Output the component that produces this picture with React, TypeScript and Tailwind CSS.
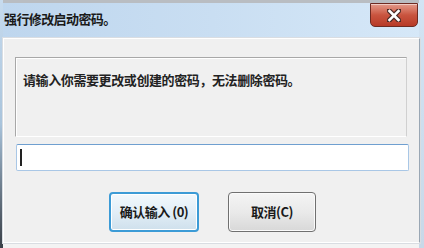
import React from "react";

const cjk = { fontFamily: '"Noto Sans CJK SC", "Noto Sans", sans-serif' };

export default function App() {
  return (
    <div className="relative w-[424px] h-[248px] overflow-hidden bg-[#f3f3f3]" style={cjk}>
      {/* window frame strip left */}
      <div className="absolute left-0 top-0 w-[3px] h-full bg-gradient-to-b from-[#c7dbee] via-[#a9c4dc] to-[#3a4048]" />
      <div className="absolute right-0 top-0 w-[5px] h-full bg-gradient-to-b from-[#d2e4f4] to-[#c8d8e8]" />
      {/* top strip */}
      <div className="h-[3px] bg-[#b9bdc2]" />
      {/* title bar */}
      <div className="h-[35px] bg-gradient-to-r from-[#bed6ee] via-[#c9def2] to-[#d6e8f8] flex items-start pl-[4px] pt-[7px]">
        <span className="text-[13px] leading-[18px] font-semibold text-[#1a1a1a] tracking-[-0.6px]">强行修改启动密码。</span>
      </div>
      {/* close button */}
      <div className="absolute left-[370px] top-[3px] w-[48px] h-[24px] rounded-b-[5px] border border-[#6e2b22] bg-gradient-to-b from-[#e39a8a] via-[#c9543f] to-[#b73a27] flex items-center justify-center shadow-[inset_0_1px_0_rgba(255,255,255,0.5)]">
        <svg width="14" height="13" viewBox="0 0 14 13">
          <path d="M2 1.5 L12 11.5 M12 1.5 L2 11.5" stroke="#4a2a26" strokeWidth="5" strokeLinecap="square" />
          <path d="M2.5 2 L11.5 11 M11.5 2 L2.5 11" stroke="#ffffff" strokeWidth="2.6" strokeLinecap="square" />
        </svg>
      </div>
      {/* body */}
      <div className="absolute left-[3px] top-[38px] w-[417px] h-[205px] bg-[#f0f0f0] border border-[#ffffff] border-r-[#9aa7b4] shadow-[0_0_0_1px_#d9dde2]">
        <div className="ml-[11px] mt-[18px] w-[392px] h-[80px] border border-[#a8a8a8] border-r-[#d0d0d0] border-b-[#ffffff] shadow-[inset_1px_1px_0_#ffffff] pl-[7px] pt-[8px]">
          <span className="text-[13px] leading-[18px] font-semibold text-[#222222] tracking-[-0.4px]">请输入你需要更改或创建的密码，无法删除密码。</span>
        </div>
        <div className="ml-[12px] mt-[7px] w-[393px] h-[27px] bg-white border border-[#a9c7e6] border-t-[#6f9fd0] rounded-[2px] flex items-center pl-[3px]">
          <div className="w-[1.5px] h-[17px] bg-[#222]" />
        </div>
        <div className="flex mt-[21px] ml-[105px] gap-[29px]">
          <button className="w-[90px] h-[40px] rounded-[4px] border-2 border-[#3c9bd6] bg-gradient-to-b from-[#f2f8fc] via-[#e2eef7] to-[#cfe0ec] flex items-center justify-center shadow-[inset_0_0_0_1px_#ffffff]">
            <span className="text-[13px] font-semibold text-[#1a1a1a] tracking-[-0.5px]">确认输入 (0)</span>
          </button>
          <button className="w-[88px] h-[40px] rounded-[4px] border border-[#707070] bg-gradient-to-b from-[#f4f4f4] via-[#eaeaea] to-[#d8d8d8] flex items-center justify-center shadow-[inset_0_0_0_1px_#fafafa]">
            <span className="text-[13px] font-semibold text-[#1a1a1a] tracking-[-0.5px]">取消(C)</span>
          </button>
        </div>
      </div>
    </div>
  );
}
